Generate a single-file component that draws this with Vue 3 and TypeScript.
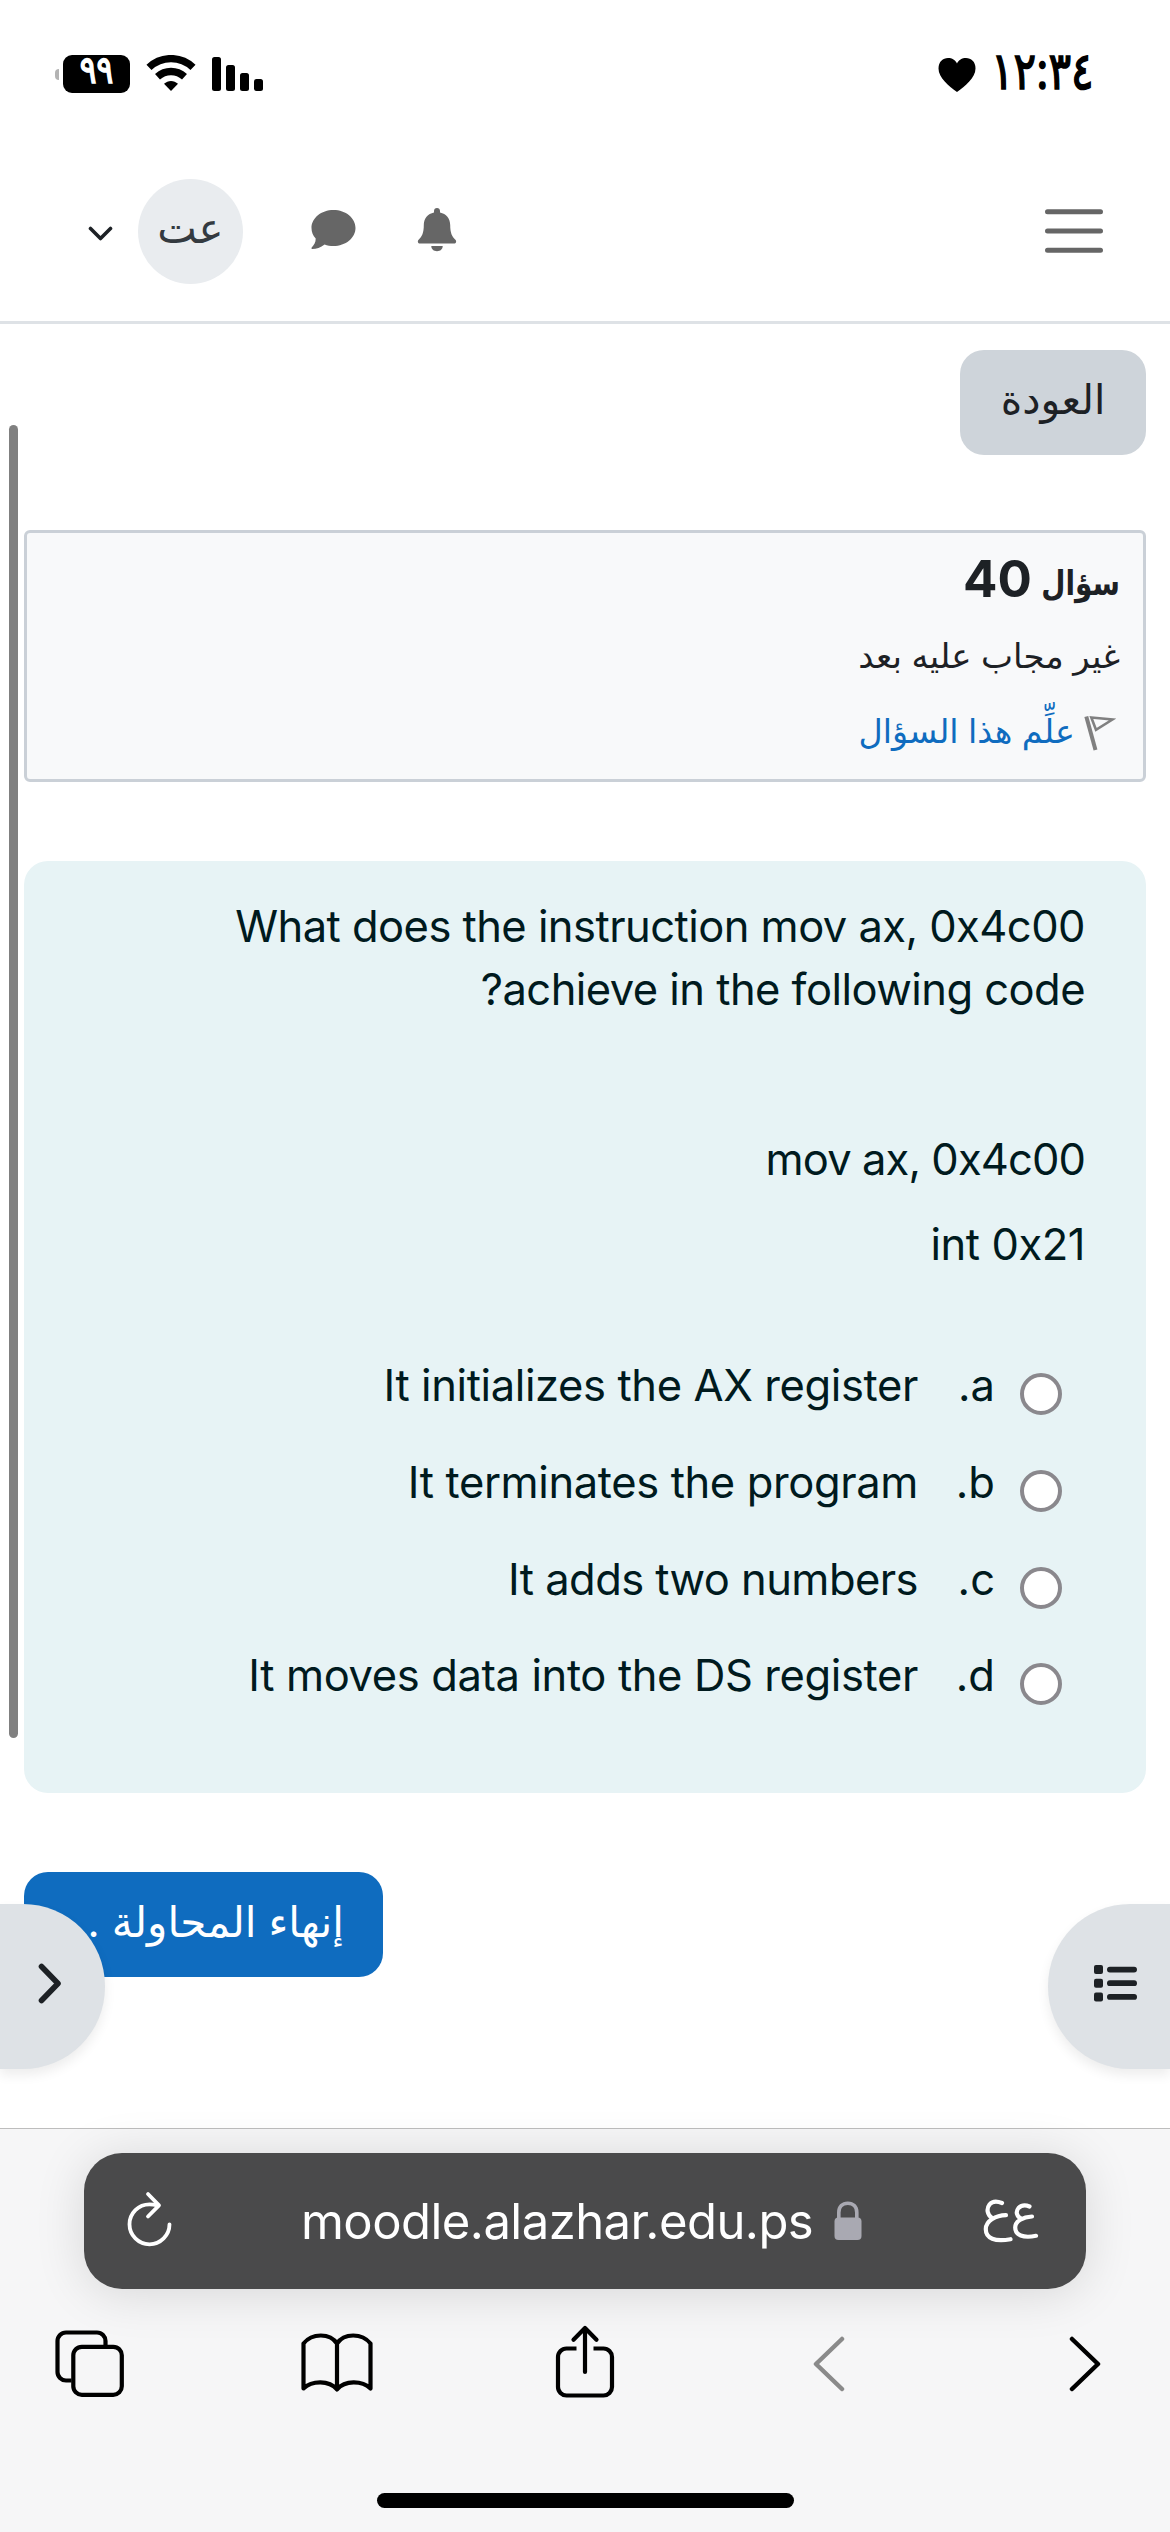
<script setup lang="ts">
interface Option {
  letter: string
  text: string
}

const intro = 'What does the instruction mov ax, 0x4c00'
const introEnd = 'achieve in the following code?'
const code: string[] = ['mov ax, 0x4c00', 'int 0x21']
const options: Option[] = [
  { letter: 'a.', text: 'It initializes the AX register' },
  { letter: 'b.', text: 'It terminates the program' },
  { letter: 'c.', text: 'It adds two numbers' },
  { letter: 'd.', text: 'It moves data into the DS register' },
]
</script>

<template>
  <div class="screen" dir="rtl">
    <header class="status" dir="ltr">
      <div class="status-left">
        <span class="battery-nub"></span>
        <span class="battery"><span>٩٩</span></span>
        <svg class="wifi" width="50" height="37" viewBox="0 0 50 37">
          <g fill="none" stroke="#000" stroke-width="7.4">
            <path d="M3 12.4C15.5 .7 34.500 .7 47 12.400" />
            <path d="M11.500 21.700C19.300 14.700 30.700 14.700 38.500 21.700" />
          </g>
          <path d="M18 28.800C22 24.900 28 24.900 32 28.800L25 36z" />
        </svg>
        <svg class="bars" width="52" height="35" viewBox="0 0 52 35">
          <rect x="0" y="0" width="9" height="34" rx="2.500" />
          <rect x="14" y="8" width="9" height="26" rx="2.500" />
          <rect x="28" y="16" width="9" height="18" rx="2.500" />
          <rect x="42" y="22" width="9" height="12" rx="2.500" />
        </svg>
      </div>
      <div class="status-right">
        <svg width="38" height="36" viewBox="0 0 38 36">
          <path d="M19 35C11 29 .5 21 .5 11.500C.5 4.500 5 1 10 1C14 1 17.500 3 19 6.500C20.500 3 24 1 28 1C33 1 37.500 4.500 37.500 11.500C37.500 21 27 29 19 35z" />
        </svg>
        <span class="time">١٢:٣٤</span>
      </div>
    </header>

    <nav class="navbar" dir="ltr">
      <svg class="caret" width="25" height="16" viewBox="0 0 25 16">
        <path d="M2.500 2.500L12.500 12.500L22.500 2.500" fill="none" stroke="#1d2125" stroke-width="3.600" stroke-linecap="round" stroke-linejoin="round" />
      </svg>
      <span class="avatar"><span>عت</span></span>
      <svg class="chat" width="45" height="41" viewBox="0 0 45 41">
        <path d="M22.500 1C34.700 1 44.500 9 44.500 19C44.500 29 34.700 37 22.500 37C19.300 37 16.300 36.500 13.600 35.500C9.500 38.500 5.500 40 1.200 40C.4 40 .2 39.200 .7 38.600C3 36 4.800 33.500 4.700 29.600C2 26.600 .5 23 .5 19C.5 9 10.300 1 22.500 1z" fill="#666" />
      </svg>
      <svg class="bell" width="40" height="45" viewBox="0 0 40 45">
        <path d="M20 1C18.200 1 17 2.200 17 4V5.500C10.800 6.800 6.800 11.500 6.800 18C6.800 26 5 29.500 1.600 32.700C.2 34.200 .8 36.500 3 36.500H37C39.200 36.500 39.800 34.200 38.400 32.700C35 29.500 33.200 26 33.200 18C33.200 11.500 29.200 6.800 23 5.500V4C23 2.200 21.800 1 20 1z" fill="#666" />
        <path d="M14.300 39H25.700C25.700 42.200 23.300 44.200 20 44.200S14.300 42.200 14.300 39z" fill="#666" />
      </svg>
      <svg class="menu" width="58" height="46" viewBox="0 0 58 46">
        <path d="M2.500 3.800H55.500M2.500 23H55.500M2.500 42.200H55.500" stroke="#666" stroke-width="5" stroke-linecap="round" />
      </svg>
    </nav>

    <main class="page">
      <button class="back"><span>العودة</span></button>

      <section class="info">
        <h3 class="number"><span class="word">سؤال</span><span class="num">40</span></h3>
        <div class="state"><span>غير مجاب عليه بعد</span></div>
        <a class="flag">
          <svg width="32" height="37" viewBox="0 0 32 37">
            <path d="M2.300 1.500L11.500 35" stroke="#808080" stroke-width="4" fill="none" />
            <path d="M7.300 2.500L28.500 4.500L12 14.800z" stroke="#808080" stroke-width="2.600" fill="none" />
          </svg>
          <span>علِّم هذا السؤال</span>
        </a>
      </section>

      <section class="question">
        <p class="intro">{{ intro }}<br />{{ introEnd }}</p>
        <div class="code">
          <p v-for="line in code" :key="line">{{ line }}</p>
        </div>
        <div class="options">
          <label v-for="o in options" :key="o.letter" class="option">
            <i class="radio"></i>
            <span class="letter">{{ o.letter }}</span>
            <span class="answer">{{ o.text }}</span>
          </label>
        </div>
      </section>

      <div class="actions">
        <button class="finish"><span>إنهاء المحاولة ...</span></button>
      </div>
    </main>

    <footer class="browser" dir="ltr">
      <div class="address">
        <svg class="reload" width="46" height="56" viewBox="0 0 46 56" fill="none" stroke="#fff" stroke-width="3.800" stroke-linecap="round" stroke-linejoin="round">
          <path d="M30.500 14.500C27.500 13.700 25 13.300 22.500 13.300A20 20 0 1 0 42.500 33.300" />
          <path d="M21 3L32 14.300L21 25.500" />
        </svg>
        <span class="url">moodle.alazhar.edu.ps</span>
        <svg class="lock" width="28" height="40" viewBox="0 0 28 40">
          <path d="M4.800 18V11.500C4.800 5.500 8.500 2.200 13.800 2.200S22.800 5.500 22.800 11.500V18" fill="none" stroke="#a9a9b2" stroke-width="3.600" />
          <rect x=".5" y="16.500" width="27" height="22.500" rx="4" fill="#a9a9b2" />
        </svg>
        <svg class="aa" width="56" height="46" viewBox="0 0 56 46" fill="none" stroke="#fff" stroke-width="4.200" stroke-linecap="round" stroke-linejoin="round">
          <path d="M19 5C14 3 9 3.500 6.500 6.500C3 11 4.500 17 9 20M23 17.200C13 17.500 3 22.500 2.800 31C2.600 40.500 12 44 27.500 41.200" />
          <path d="M46.500 8.500C42 6.500 38 7.500 35.500 10C32.500 13.500 33.500 18.500 38 20.500M49 18.500C40 19 32.200 23 32.200 29.500C32.200 37 40 40.500 53 37.800" />
        </svg>
      </div>
      <div class="toolbar">
        <svg class="tabs" width="70" height="68" viewBox="0 0 70 68" fill="none" stroke="#000" stroke-width="4.200">
          <path d="M16.500 50.500H11A8.500 8.500 0 0 1 2.500 42V11A8.500 8.500 0 0 1 11 2.500H42A8.500 8.500 0 0 1 50.500 11V16" />
          <rect x="18.300" y="16.800" width="48.500" height="48" rx="8.500" />
        </svg>
        <svg class="book" width="72" height="62" viewBox="0 0 72 62" fill="none" stroke="#000" stroke-width="4.200" stroke-linecap="round" stroke-linejoin="round">
          <path d="M36 11.500C29 .8 11 .8 2.500 11.500V56.500C11 48.500 28 48 36 57.500C44 48 61 48.500 69.500 56.500V11.500C61 .8 43 .8 36 11.500V57.500" />
        </svg>
        <svg class="share" width="60" height="74" viewBox="0 0 60 74" fill="none" stroke="#000" stroke-width="4.200">
          <path d="M21.500 23.500H11.500A8.500 8.500 0 0 0 3 32V62A8.500 8.500 0 0 0 11.500 70.500H48.500A8.500 8.500 0 0 0 57 62V32A8.500 8.500 0 0 0 48.500 23.500H38.500" />
          <path d="M30 47V3.500M18.500 14.800L30 3L41.500 14.800" stroke-linecap="round" stroke-linejoin="round" />
        </svg>
        <svg class="prev" width="32" height="56" viewBox="0 0 32 56">
          <path d="M29 3L3 28L29 53" fill="none" stroke="#8a8a8a" stroke-width="4.500" stroke-linecap="round" stroke-linejoin="round" />
        </svg>
        <svg class="next" width="32" height="56" viewBox="0 0 32 56">
          <path d="M3 3L29 28L3 53" fill="none" stroke="#000" stroke-width="4.500" stroke-linecap="round" stroke-linejoin="round" />
        </svg>
      </div>
      <div class="home"></div>
    </footer>

    <i class="scrollbar"></i>
    <div class="drawer drawer-left">
      <svg width="24" height="41" viewBox="0 0 24 41">
        <path d="M3.500 3.500L20 20.500L3.500 37.500" fill="none" stroke="#1d2125" stroke-width="5.600" stroke-linecap="round" stroke-linejoin="round" />
      </svg>
    </div>
    <div class="drawer drawer-right">
      <svg width="44" height="38" viewBox="0 0 44 38" fill="#1d2125">
        <rect x="0" y="1" width="9" height="9" rx="2" />
        <rect x="0" y="14.700" width="9" height="9" rx="2" />
        <rect x="0" y="28.400" width="9" height="9" rx="2" />
        <rect x="13" y="2.700" width="30" height="5.800" rx="2.900" />
        <rect x="13" y="16.300" width="30" height="5.800" rx="2.900" />
        <rect x="13" y="30" width="30" height="5.800" rx="2.900" />
      </svg>
    </div>
  </div>
</template>

<style>
body {
  margin: 0;
  background: #fff;
}
</style>

<style scoped>
.screen {
  position: relative;
  width: 1170px;
  height: 2532px;
  overflow: hidden;
  display: flex;
  flex-direction: column;
  background: #fff;
  color: #1d2125;
  font-family: Inter, 'DejaVu Sans', sans-serif;
}
svg {
  display: block;
  flex: none;
}
p,
h3 {
  margin: 0;
}
button {
  border: 0;
  padding: 0;
  font: inherit;
  color: inherit;
}
span {
  white-space: nowrap;
}
.status {
  height: 147px;
  flex: none;
  box-sizing: border-box;
  padding: 55px 76px 0 55px;
  display: flex;
  justify-content: space-between;
  align-items: flex-start;
  color: #000;
}
.status-left,
.status-right {
  display: flex;
  align-items: flex-start;
}
.battery-nub {
  width: 4px;
  height: 11px;
  margin: 14px 4px 0 0;
  border-radius: 4px 0 0 4px;
  background: #b3b3b3;
}
.battery {
  width: 67px;
  height: 38px;
  border-radius: 9px;
  background: #000;
  color: #fff;
  font-size: 38px;
  line-height: 28px;
  text-align: center;
  -webkit-text-stroke: 1.6px #fff;
}
.battery span {
  display: inline-block;
  margin: 0 -10px;
  transform: scaleX(0.82);
}
.wifi {
  margin-left: 16px;
}
.bars {
  margin: 2px 0 0 16px;
}
.status-right svg {
  margin: 2px 15px 0 0;
}
.time {
  width: 103px;
  font-size: 52px;
  line-height: 32px;
  transform: scaleX(0.81);
  transform-origin: left;
  -webkit-text-stroke: 1.6px #000;
}
.navbar {
  height: 177px;
  flex: none;
  box-sizing: border-box;
  border-bottom: 3px solid #dee2e6;
  padding: 0 67px 0 88px;
  display: flex;
  align-items: flex-start;
}
.caret {
  margin-top: 79px;
}
.avatar {
  width: 105px;
  height: 105px;
  margin: 32px 0 0 25px;
  border-radius: 50%;
  background: #e9ecef;
  color: #343a40;
  font-size: 42px;
  line-height: 98px;
  text-align: center;
}
.chat {
  margin: 62px 0 0 68px;
}
.bell {
  margin: 60px 0 0 61px;
}
.menu {
  margin: 61px 0 0 auto;
}
.page {
  height: 1804px;
  flex: none;
  box-sizing: border-box;
  padding: 26px 24px 0;
  display: flex;
  flex-direction: column;
  align-items: flex-start;
}
.back {
  width: 186px;
  height: 105px;
  padding-bottom: 6px;
  border-radius: 24px;
  background: #ced4da;
  font-size: 41px;
  line-height: 97px;
}
.info {
  width: 1122px;
  height: 252px;
  box-sizing: border-box;
  margin-top: 75px;
  padding: 12px 23px 0;
  border: 3px solid #cad0d7;
  border-radius: 6px;
  background: #f8f9fa;
}
.number {
  display: flex;
  align-items: baseline;
  gap: 12px;
  height: 70px;
  line-height: 68px;
}
.word {
  width: 76px;
  font-size: 34px;
  transform: translateY(-2px) scaleX(0.82);
  transform-origin: right;
}
.num {
  font-size: 51px;
}
.state {
  font-size: 34px;
  line-height: 50px;
  margin-top: 16px;
}
.flag {
  display: flex;
  align-items: flex-start;
  margin-top: 25px;
  color: #0f6cbf;
  font-size: 33.4px;
  line-height: 50px;
}
.flag svg {
  margin: 9px 4px 0 9px;
}
.question {
  width: 1122px;
  height: 932px;
  box-sizing: border-box;
  margin-top: 79px;
  padding: 34px 61px 0;
  border-radius: 24px;
  background: #e7f3f5;
  color: #001a1e;
  font-size: 43.5px;
  line-height: 63px;
}
.intro {
  letter-spacing: -0.54px;
}
.code {
  margin-top: 107px;
  display: flex;
  flex-direction: column;
  gap: 22px;
  letter-spacing: -0.45px;
}
.code p:first-child {
  letter-spacing: -0.9px;
}
.options {
  margin-top: 78px;
  padding-right: 23px;
  display: flex;
  flex-direction: column;
  gap: 33.8px;
}
.option {
  display: flex;
  align-items: flex-start;
}
.radio {
  box-sizing: border-box;
  width: 42px;
  height: 42px;
  margin: 19px 0 0 25px;
  border: 4.500px solid #8a888d;
  border-radius: 50%;
  background: #fff;
}
.letter {
  width: 77px;
}
.answer {
  letter-spacing: -0.38px;
}
.option:nth-child(3) .answer {
  letter-spacing: -0.56px;
}
.actions {
  width: 100%;
  margin-top: 79px;
  display: flex;
  justify-content: flex-end;
}
.finish {
  width: 359px;
  height: 105px;
  box-sizing: border-box;
  padding: 0 39px 6px 0;
  border-radius: 24px;
  background: #0f6cbf;
  color: #fff;
  font-size: 42.2px;
  line-height: 97px;
  text-align: right;
}
.browser {
  height: 404px;
  flex: none;
  box-sizing: border-box;
  border-top: 1.500px solid #bdbdbd;
  background: #f6f6f7;
  display: flex;
  flex-direction: column;
}
.address {
  width: 1002px;
  height: 136px;
  margin: 24px 0 0 84px;
  border-radius: 38px;
  background: #4a4a4b;
  box-shadow: 0 4px 50px rgba(0, 0, 0, 0.13);
  display: flex;
  align-items: flex-start;
}
.reload {
  margin: 38px 0 0 43px;
}
.url {
  width: 533px;
  margin-left: 128px;
  color: #fff;
  font-size: 49px;
  letter-spacing: -0.55px;
  line-height: 137px;
}
.lock {
  margin-top: 48px;
}
.aa {
  margin: 45px 0 0 121px;
}
.toolbar {
  height: 80px;
  margin-top: 34px;
  padding: 0 70px 0 55px;
  display: flex;
  align-items: flex-start;
}
.tabs {
  margin-top: 7px;
}
.book {
  margin: 9px 0 0 176px;
}
.share {
  margin: 2px 0 0 182px;
}
.prev {
  margin: 13px 0 0 198px;
}
.next {
  margin: 13px 0 0 224px;
}
.home {
  width: 417px;
  height: 15px;
  margin: 90px 0 0 377px;
  border-radius: 8px;
  background: #000;
}
.scrollbar {
  position: absolute;
  left: 9px;
  top: 425px;
  width: 9px;
  height: 1313px;
  border-radius: 5px;
  background: #808080;
}
.drawer {
  position: absolute;
  top: 1904px;
  height: 165px;
  box-sizing: border-box;
  background: #dee2e6;
  box-shadow: 0 6px 12px rgba(0, 0, 0, 0.075);
}
.drawer-left {
  left: 0;
  width: 105px;
  padding: 59px 0 0 38px;
  border-radius: 0 82px 82px 0;
  direction: ltr;
}
.drawer-right {
  right: 0;
  width: 122px;
  padding: 60px 0 0 46px;
  border-radius: 82px 0 0 82px;
  direction: ltr;
}
</style>
